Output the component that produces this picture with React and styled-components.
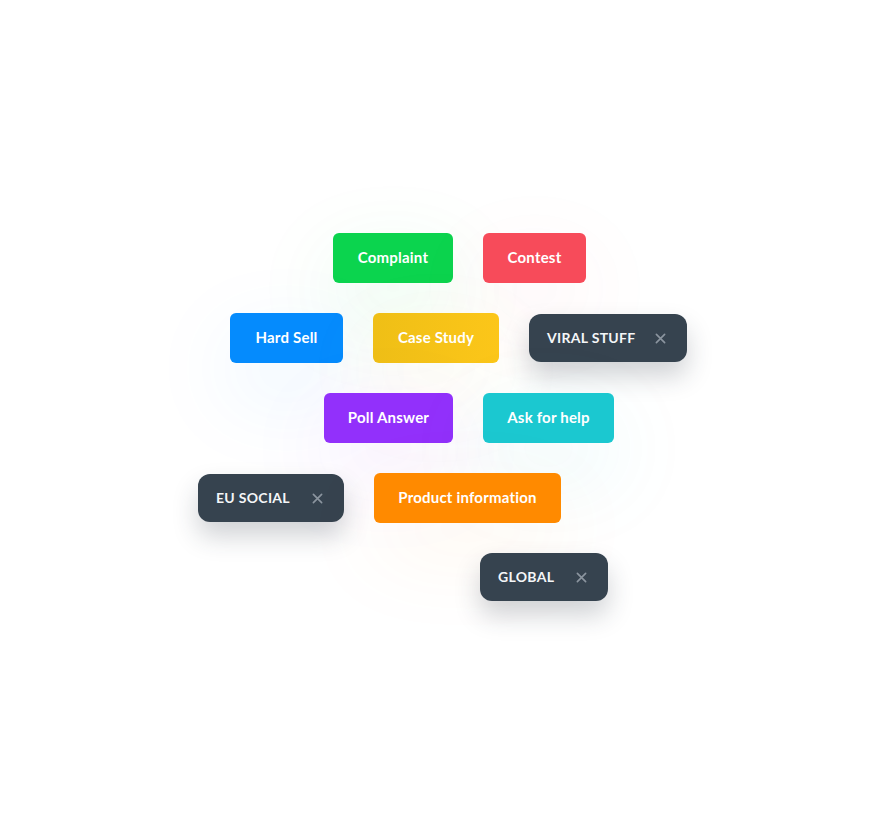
import React from 'react';
import styled, { createGlobalStyle } from 'styled-components';

const GlobalStyle = createGlobalStyle`
  body {
    margin: 0;
    background: #ffffff;
    font-family: Lato, "Noto Sans", sans-serif;
  }
`;

const Canvas = styled.div`
  width: 884px;
  height: 833px;
  padding-top: 233px;
  box-sizing: border-box;
  display: flex;
  flex-direction: column;
  gap: 30px;
  overflow: hidden;
`;

const Row = styled.div`
  display: flex;
  align-items: center;
  gap: 30px;
  padding-left: ${p => p.$offset}px;
`;

const Tag = styled.div`
  width: ${p => p.$width}px;
  height: 50px;
  box-sizing: border-box;
  padding-bottom: 2px;
  border-radius: 6px;
  display: flex;
  align-items: center;
  justify-content: center;
  color: #ffffff;
  font-size: 15px;
  font-weight: 700;
  letter-spacing: 0.2px;
  background: ${p => p.$color};
  box-shadow: 0 30px 90px ${p => p.$glow};
`;

const DarkTag = styled.div`
  width: ${p => p.$width}px;
  height: 48px;
  box-sizing: border-box;
  padding: 0 21px 1px 18px;
  border-radius: 12px;
  display: flex;
  align-items: center;
  justify-content: space-between;
  background: #36434f;
  color: #f4f6f8;
  font-size: 14px;
  font-weight: 700;
  letter-spacing: 0.3px;
  text-transform: uppercase;
  box-shadow: 0 14px 26px rgba(40, 52, 64, 0.22);
`;

const Close = styled.svg`
  width: 11px;
  height: 11px;
  flex-shrink: 0;
  margin-top: 1px;
`;

const CloseIcon = () => (
  <Close viewBox="0 0 12 12">
    <path d="M1.5 1.5l9 9M10.5 1.5l-9 9" stroke="#8b959f" strokeWidth="1.8" strokeLinecap="round" />
  </Close>
);

const rows = [
  { offset: 333, items: [
    { label: 'Complaint', width: 120, color: '#0bd44e', glow: 'rgba(11, 212, 78, 0.12)' },
    { label: 'Contest', width: 103, color: '#f74b5a', glow: 'rgba(247, 75, 90, 0.08)' },
  ] },
  { offset: 230, items: [
    { label: 'Hard Sell', width: 113, color: '#058bfd', glow: 'rgba(5, 139, 253, 0.10)' },
    { label: 'Case Study', width: 126, color: 'linear-gradient(90deg, #efbf16, #fcc619)', glow: 'rgba(248, 194, 24, 0.08)' },
    { label: 'Viral Stuff', width: 158, dark: true },
  ] },
  { offset: 324, items: [
    { label: 'Poll Answer', width: 129, color: '#9230fb', glow: 'rgba(146, 48, 251, 0.10)' },
    { label: 'Ask for help', width: 131, color: '#1bc8d0', glow: 'rgba(27, 200, 208, 0.10)' },
  ] },
  { offset: 198, items: [
    { label: 'EU Social', width: 146, dark: true },
    { label: 'Product information', width: 187, color: '#ff8a00', glow: 'rgba(255, 138, 0, 0.08)' },
  ] },
  { offset: 480, items: [
    { label: 'Global', width: 128, dark: true },
  ] },
];

const App = () => (
  <>
    <GlobalStyle />
    <Canvas>
      {rows.map((row, i) => (
        <Row key={i} $offset={row.offset}>
          {row.items.map(item =>
            item.dark ? (
              <DarkTag key={item.label} $width={item.width}>
                <span>{item.label}</span>
                <CloseIcon />
              </DarkTag>
            ) : (
              <Tag key={item.label} $width={item.width} $color={item.color} $glow={item.glow}>
                {item.label}
              </Tag>
            )
          )}
        </Row>
      ))}
    </Canvas>
  </>
);

export default App;
